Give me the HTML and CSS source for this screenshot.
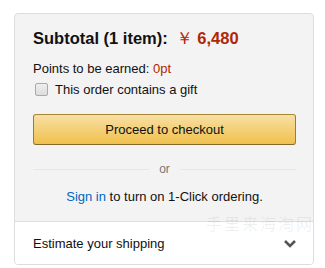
FILE: index.html
```html
<!DOCTYPE html>
<html>
<head>
<meta charset="utf-8">
<link rel="stylesheet" href="styles.css">
</head>
<body>
<div class="box">
  <div class="main">
    <div class="subtotal">Subtotal (1 item): <span class="price"><span class="yen">￥</span>6,480</span></div>
    <div class="points">Points to be earned: <span class="red">0pt</span></div>
    <label class="gift"><span class="cb"></span>This order contains a gift</label>
    <div class="btn">Proceed to checkout</div>
    <div class="or"><span>or</span></div>
    <div class="signin"><span class="link">Sign in</span> to turn on 1-Click ordering.</div>
  </div>
  <div class="ship">
    <span>Estimate your shipping</span>
    <svg class="chev" width="14" height="10" viewBox="0 0 14 10"><path d="M2 2 L7 7 L12 2" fill="none" stroke="#555" stroke-width="2.6"/></svg>
  </div>
</div>
<div class="wm">手里来海淘网</div>
</body>
</html>
```
FILE: styles.css
```css
html, body { margin: 0; padding: 0; background: #fff; }
body { position: relative; font-family: "Liberation Sans", Arial, sans-serif; color: #111; }
.box {
  margin: 13px 0 0 14px;
  width: 298px;
  border: 1px solid #ddd;
  border-radius: 4px;
  background: #f3f3f3;
  overflow: hidden;
}
.main { padding: 14px 17px 16px 18px; }
.subtotal { font-size: 16.5px; font-weight: bold; line-height: 20px; }
.price { color: #b12704; margin-left: 4px; }
.yen { font-weight: normal; margin-right: 4px; }
.points { font-size: 13px; margin-top: 12px; line-height: 17px; color: #111; }
.red { color: #b12704; }
.gift { display: flex; align-items: center; font-size: 13px; margin-top: 4px; line-height: 17px; }
.cb {
  width: 11px; height: 11px; border: 1px solid #aaa; border-radius: 2px;
  background: linear-gradient(#eee, #ddd); margin: 0 7px 0 2px;
}
.btn {
  margin-top: 16px;
  height: 29px;
  border: 1px solid #a88734;
  border-color: #a88734 #9c7e31 #846a29;
  border-radius: 3px;
  background: linear-gradient(#f7dfa5, #f0c14b);
  font-size: 13px; line-height: 29px; text-align: center; color: #111;
}
.or {
  display: flex; align-items: center; gap: 10px; margin-top: 17px;
  font-size: 12px; color: #767676;
}
.or::before, .or::after { content: ""; flex: 1; height: 1px; background: #e7e7e7; }
.signin { font-size: 13px; text-align: center; margin-top: 12px; line-height: 17px; }
.link { color: #0066c0; }
.ship {
  background: #fff; border-top: 1px solid #ddd;
  height: 42px; display: flex; align-items: center; justify-content: space-between;
  padding: 0 16px 0 18px; font-size: 13px;
}
.chev { margin-top: 1px; }
.wm {
  position: absolute; left: 206px; top: 211px;
  white-space: nowrap;
  font-family: "Noto Sans CJK SC", sans-serif; font-size: 16px; letter-spacing: 2px;
  color: rgba(0,0,0,0.07); pointer-events: none;
}
```
